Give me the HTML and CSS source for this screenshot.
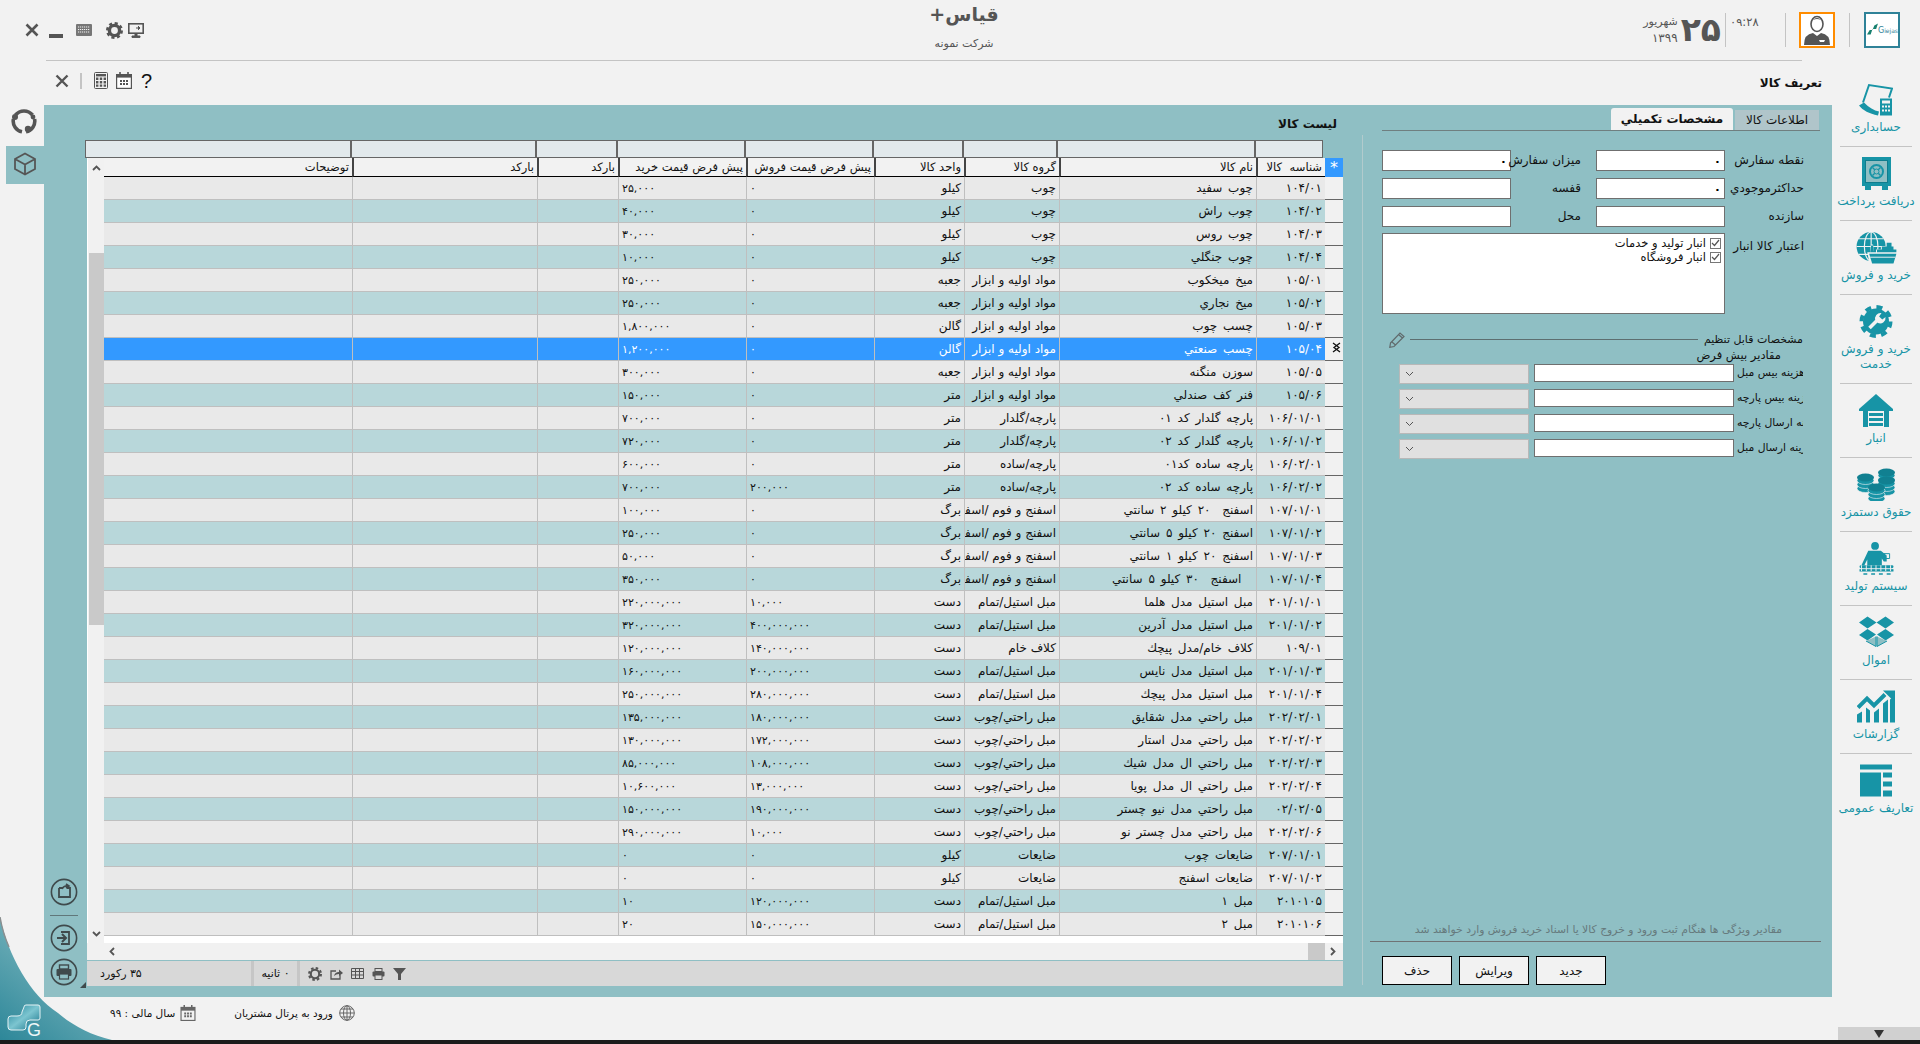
FILE: index.html
```html
<!DOCTYPE html>
<html lang="fa">
<head>
  <meta charset="UTF-8">
  <title>قیاس+</title>
  <link rel="stylesheet" href="styles.css">
</head>
<body>

  <!-- curved corner behind the panel -->
  <svg class="corner" width="130" height="135" viewBox="0 0 130 135">
    <defs>
      <linearGradient id="cornerFill" x1="0" y1="1" x2="0.7" y2="0">
        <stop offset="0" stop-color="#2d8799"/>
        <stop offset="1" stop-color="#8cc0c6"/>
      </linearGradient>
      <linearGradient id="logoFill" x1="0" y1="0" x2="1" y2="1">
        <stop offset="0" stop-color="#1c7f96"/>
        <stop offset="0.5" stop-color="#7cc5d0"/>
        <stop offset="1" stop-color="#0f6c84"/>
      </linearGradient>
    </defs>
    <path d="M0 12 C8 50 30 90 58 108 C72 120 90 130 112 135 L0 135 Z" fill="url(#cornerFill)"/>
    <path d="M0 12 C2 24 5 33 9 42" fill="none" stroke="#8a8f90" stroke-width="1.5"/>
    <path d="M24 102 q0 -2 2 -2 h12 q2 0 2 2 v11 q0 2 -2 2 h-8 q-4 0 -4 4 v3 q0 3 -3 3 h-12 q-3 0 -3 -3 v-8 q0 -3 3 -3 h6 q5 0 5 -4 z" fill="url(#logoFill)" stroke="#e6f3f5" stroke-width="1"/>
    <text x="27" y="131" class="corner-g">G</text>
  </svg>

  <header class="head">
    <div class="win-tools">
      <svg class="i-close" width="14" height="14" viewBox="0 0 14 14"><path d="M1.5 1.5 L12.5 12.5 M12.5 1.5 L1.5 12.5" stroke="#555" stroke-width="2.6"/></svg>
      <span class="i-min"></span>
      <svg class="i-kbd" width="16" height="12" viewBox="0 0 16 12"><rect width="16" height="12" rx="1" fill="#777"/><path d="M2 3 h12 M2 5.5 h12 M2 8 h12" stroke="#f2f2f2" stroke-width="1.1" stroke-dasharray="1.2 0.8"/></svg>
      <svg class="i-gear" width="17" height="17" viewBox="0 0 20 20"><circle cx="10" cy="10" r="6" fill="none" stroke="#555" stroke-width="4"/><circle cx="10" cy="10" r="8.5" fill="none" stroke="#555" stroke-width="3" stroke-dasharray="3.6 3.07"/></svg>
      <svg class="i-screen" width="16" height="15" viewBox="0 0 16 15"><rect x="0.8" y="0.8" width="14.4" height="9.4" fill="none" stroke="#555" stroke-width="1.6"/><path d="M7 11 h2 v2 h3 v1.4 h-8 v-1.4 h3z M8 5 h4 M10 3 l2 2 l-2 2" fill="#555" stroke="#555"/></svg>
    </div>
    <div class="brand">
      <div class="brand-name" dir="rtl">قیاس+</div>
      <div class="brand-co" dir="rtl">شرکت نمونه</div>
    </div>
    <div class="status-info">
      <div class="date-small" dir="rtl"><span>شهریور</span><span class="year">۱۳۹۹</span></div>
      <div class="date-big">۲۵</div>
      <div class="sep date-sep"></div>
      <div class="clock">۰۹:۲۸</div>
      <div class="sep clock-sep"></div>
      <div class="avatar">
        <svg width="32" height="32" viewBox="0 0 32 32"><ellipse cx="16" cy="10" rx="6" ry="7.5" fill="#fff" stroke="#555" stroke-width="1.6"/><path d="M10 8 q6 -8 12 0 q-2 -3 -6 -3 q-4 0 -6 3z" fill="#555"/><path d="M3 31 q0 -11 9 -12 l4 3 l4 -3 q9 1 9 12z" fill="#555"/><path d="M18 26 h6 l-1 2 h-4z" fill="#fff"/></svg>
      </div>
      <div class="sep logo-sep"></div>
      <div class="app-logo">
        <svg width="12" height="14" viewBox="0 0 12 14"><path d="M0 12 l3 -5 h3 l2 -5 l4 -2 l-2 6 h-4 l-2 6z" fill="#17806f"/></svg>
        <span class="app-logo-g">G</span><span class="app-logo-t">iejas</span>
      </div>
    </div>
  </header>
  <div class="head-rule"></div>

  <div class="middle">

    <aside class="rail">
      <svg class="rail-ring" width="26" height="26" viewBox="0 0 26 26"><path d="M4.5 7 A11 11 0 0 1 21.5 7 M23.6 11 A11 11 0 0 1 15 23.8 M11 23.8 A11 11 0 0 1 2.4 11" fill="none" stroke="#555" stroke-width="3.6"/><circle cx="4" cy="9" r="3" fill="#555"/><circle cx="17" cy="21" r="3.2" fill="#555"/><circle cx="22" cy="9" r="2.4" fill="#555"/></svg>
      <div class="rail-tab">
        <svg width="24" height="24" viewBox="0 0 24 24"><path d="M12 1.5 L22 7 V17 L12 22.5 L2 17 V7 Z M2 7 L12 12.5 L22 7 M12 12.5 V22.5" fill="none" stroke="#555" stroke-width="1.8"/></svg>
      </div>
    </aside>

    <main class="center">
      <div class="toolbar">
        <div class="tool-icons">
          <svg width="14" height="14" viewBox="0 0 14 14"><path d="M1.5 1.5 L12.5 12.5 M12.5 1.5 L1.5 12.5" stroke="#555" stroke-width="2.4"/></svg>
          <span class="tool-sep"></span>
          <svg class="t-calc" width="14" height="17" viewBox="0 0 14 17"><rect x="0.5" y="0.5" width="13" height="16" rx="1" fill="none" stroke="#555"/><rect x="2" y="2" width="10" height="2.4" fill="#555"/><path d="M2 5.6h2.4v2.4h-2.4z M5.8 5.6h2.4v2.4h-2.4z M9.6 5.6h2.4v2.4h-2.4z M2 9h2.4v2.4h-2.4z M5.8 9h2.4v2.4h-2.4z M9.6 9h2.4v2.4h-2.4z M2 12.4h2.4v2.4h-2.4z M5.8 12.4h2.4v2.4h-2.4z M9.6 12.4h2.4v2.4h-2.4z" fill="#555"/></svg>
          <svg class="t-cal" width="16" height="17" viewBox="0 0 16 17"><rect x="0.6" y="2.6" width="14.8" height="13.8" fill="#fff" stroke="#555" stroke-width="1.2"/><rect x="0.6" y="2.6" width="14.8" height="3" fill="#555"/><path d="M4 0v3 M12 0v3" stroke="#555" stroke-width="1.6"/><path d="M4 8h2v2h-2z M7 8h2v2h-2z M10 8h2v2h-2z M4 11h2v2h-2z M7 11h2v2h-2z M10 11h2v2h-2z" fill="#555"/></svg>
          <span class="t-help">?</span>
        </div>
        <h2 class="page-title" dir="rtl">تعريف كالا</h2>
      </div>

      <div class="panel">

        <div class="panel-rail">
          <svg class="pr-a" width="28" height="28" viewBox="0 0 28 28"><circle cx="14" cy="14" r="12.6" fill="none" stroke="#3f4a4c" stroke-width="1.6"/><path d="M9 10 h4 M17 10 h3 v9 h-11 v-9" fill="none" stroke="#3f4a4c" stroke-width="1.8"/><path d="M12 11 q2 -4 7 -3 M16 6 l3 2 l-3 2" fill="none" stroke="#3f4a4c" stroke-width="1.6"/></svg>
          <div class="pr-line"></div>
          <svg class="pr-b" width="28" height="28" viewBox="0 0 28 28"><circle cx="14" cy="14" r="12.6" fill="none" stroke="#3f4a4c" stroke-width="1.6"/><path d="M7 14 h8 M12 10 l4 4 l-4 4" fill="none" stroke="#3f4a4c" stroke-width="2"/><path d="M11 8 h8 v12 h-8" fill="none" stroke="#3f4a4c" stroke-width="1.8"/></svg>
          <div class="pr-print">
            <svg width="28" height="28" viewBox="0 0 28 28"><circle cx="14" cy="14" r="12.6" fill="none" stroke="#3f4a4c" stroke-width="1.6"/><rect x="9.5" y="7" width="9" height="4" fill="none" stroke="#3f4a4c" stroke-width="1.4"/><rect x="6.5" y="11" width="15" height="7" rx="1" fill="#3f4a4c"/><rect x="9.5" y="16" width="9" height="5" fill="#8fbfc4" stroke="#3f4a4c" stroke-width="1.2"/></svg>
            <span class="pr-mark"></span>
          </div>
        </div>

        <section class="list">
          <h3 class="list-title" dir="rtl">ليست كالا</h3>
          <div class="group-head" dir="rtl">
            <span class="gh-1"></span><span class="gh-2"></span><span class="gh-3"></span><span class="gh-4"></span><span class="gh-5"></span><span class="gh-6"></span><span class="gh-7"></span><span class="gh-8"></span><span class="gh-9"></span>
          </div>
          <div class="grid-body">
            <div class="vscroll">
              <svg class="vs-up" width="9" height="6" viewBox="0 0 9 6"><path d="M1 5 L4.5 1.5 L8 5" fill="none" stroke="#555" stroke-width="1.8"/></svg>
              <div class="vs-thumb"></div>
              <svg class="vs-down" width="9" height="6" viewBox="0 0 9 6"><path d="M1 1 L4.5 4.5 L8 1" fill="none" stroke="#555" stroke-width="1.8"/></svg>
            </div>
            <div class="grid-wrap">
              <table class="grid" dir="rtl">
                <colgroup>
                  <col class="c-ind"><col class="c-code"><col class="c-name"><col class="c-group"><col class="c-unit"><col class="c-price"><col class="c-price"><col class="c-bar"><col class="c-bar2"><col class="c-note">
                </colgroup>
                <thead>
                  <tr>
                    <th class="star">*</th>
                    <th>شناسه كالا</th>
                    <th>نام كالا</th>
                    <th>گروه كالا</th>
                    <th>واحد كالا</th>
                    <th>پیش فرض قیمت فروش</th>
                    <th>پیش فرض قیمت خرید</th>
                    <th>باركد</th>
                    <th>باركد</th>
                    <th>توضیحات</th>
                  </tr>
                </thead>
                <tbody>
                  <tr><td></td><td>۱۰۴/۰۱</td><td>چوب سفيد</td><td>چوب</td><td>كيلو</td><td class="num">۰</td><td class="num">۲۵,۰۰۰</td><td></td><td></td><td></td></tr>
                  <tr><td></td><td>۱۰۴/۰۲</td><td>چوب راش</td><td>چوب</td><td>كيلو</td><td class="num">۰</td><td class="num">۴۰,۰۰۰</td><td></td><td></td><td></td></tr>
                  <tr><td></td><td>۱۰۴/۰۳</td><td>چوب روس</td><td>چوب</td><td>كيلو</td><td class="num">۰</td><td class="num">۳۰,۰۰۰</td><td></td><td></td><td></td></tr>
                  <tr><td></td><td>۱۰۴/۰۴</td><td>چوب جنگلي</td><td>چوب</td><td>كيلو</td><td class="num">۰</td><td class="num">۱۰,۰۰۰</td><td></td><td></td><td></td></tr>
                  <tr><td></td><td>۱۰۵/۰۱</td><td>ميخ ميخكوب</td><td>مواد اوليه و ابزار</td><td>جعبه</td><td class="num">۰</td><td class="num">۲۵۰,۰۰۰</td><td></td><td></td><td></td></tr>
                  <tr><td></td><td>۱۰۵/۰۲</td><td>ميخ نجاري</td><td>مواد اوليه و ابزار</td><td>جعبه</td><td class="num">۰</td><td class="num">۲۵۰,۰۰۰</td><td></td><td></td><td></td></tr>
                  <tr><td></td><td>۱۰۵/۰۳</td><td>چسب چوب</td><td>مواد اوليه و ابزار</td><td>گالن</td><td class="num">۰</td><td class="num">۱,۸۰۰,۰۰۰</td><td></td><td></td><td></td></tr>
                  <tr class="sel"><td><svg width="9" height="11" viewBox="0 0 9 11"><path d="M8 1 L2 5.5 L8 10 M1 1 L7 5.5 L1 10" fill="none" stroke="#111" stroke-width="1.3"/></svg></td><td>۱۰۵/۰۴</td><td>چسب صنعتي</td><td>مواد اوليه و ابزار</td><td>گالن</td><td class="num">۰</td><td class="num">۱,۲۰۰,۰۰۰</td><td></td><td></td><td></td></tr>
                  <tr><td></td><td>۱۰۵/۰۵</td><td>سوزن منگنه</td><td>مواد اوليه و ابزار</td><td>جعبه</td><td class="num">۰</td><td class="num">۳۰۰,۰۰۰</td><td></td><td></td><td></td></tr>
                  <tr><td></td><td>۱۰۵/۰۶</td><td>فنر كف صندلي</td><td>مواد اوليه و ابزار</td><td>متر</td><td class="num">۰</td><td class="num">۱۵۰,۰۰۰</td><td></td><td></td><td></td></tr>
                  <tr><td></td><td>۱۰۶/۰۱/۰۱</td><td>پارچه گلدار كد ۰۱</td><td>پارچه/گلدار</td><td>متر</td><td class="num">۰</td><td class="num">۷۰۰,۰۰۰</td><td></td><td></td><td></td></tr>
                  <tr><td></td><td>۱۰۶/۰۱/۰۲</td><td>پارچه گلدار كد ۰۲</td><td>پارچه/گلدار</td><td>متر</td><td class="num">۰</td><td class="num">۷۲۰,۰۰۰</td><td></td><td></td><td></td></tr>
                  <tr><td></td><td>۱۰۶/۰۲/۰۱</td><td>پارچه ساده كد۰۱</td><td>پارچه/ساده</td><td>متر</td><td class="num">۰</td><td class="num">۶۰۰,۰۰۰</td><td></td><td></td><td></td></tr>
                  <tr><td></td><td>۱۰۶/۰۲/۰۲</td><td>پارچه ساده كد ۰۲</td><td>پارچه/ساده</td><td>متر</td><td class="num">۲۰۰,۰۰۰</td><td class="num">۷۰۰,۰۰۰</td><td></td><td></td><td></td></tr>
                  <tr><td></td><td>۱۰۷/۰۱/۰۱</td><td>اسفنج&nbsp; ۲۰ كيلو ۲ سانتي</td><td>اسفنج و فوم /اسفنج</td><td>برگ</td><td class="num">۰</td><td class="num">۱۰۰,۰۰۰</td><td></td><td></td><td></td></tr>
                  <tr><td></td><td>۱۰۷/۰۱/۰۲</td><td>اسفنج ۲۰ كيلو ۵ سانتي</td><td>اسفنج و فوم /اسفنج</td><td>برگ</td><td class="num">۰</td><td class="num">۲۵۰,۰۰۰</td><td></td><td></td><td></td></tr>
                  <tr><td></td><td>۱۰۷/۰۱/۰۳</td><td>اسفنج ۲۰ كيلو ۱ سانتي</td><td>اسفنج و فوم /اسفنج</td><td>برگ</td><td class="num">۰</td><td class="num">۵۰,۰۰۰</td><td></td><td></td><td></td></tr>
                  <tr><td></td><td>۱۰۷/۰۱/۰۴</td><td>&nbsp; اسفنج&nbsp; ۳۰ كيلو ۵ سانتي</td><td>اسفنج و فوم /اسفنج</td><td>برگ</td><td class="num">۰</td><td class="num">۳۵۰,۰۰۰</td><td></td><td></td><td></td></tr>
                  <tr><td></td><td>۲۰۱/۰۱/۰۱</td><td>مبل استيل مدل هلما</td><td>مبل استيل/تمام</td><td>دست</td><td class="num">۱۰,۰۰۰</td><td class="num">۲۲۰,۰۰۰,۰۰۰</td><td></td><td></td><td></td></tr>
                  <tr><td></td><td>۲۰۱/۰۱/۰۲</td><td>مبل استيل مدل آدرين</td><td>مبل استيل/تمام</td><td>دست</td><td class="num">۴۰۰,۰۰۰,۰۰۰</td><td class="num">۳۲۰,۰۰۰,۰۰۰</td><td></td><td></td><td></td></tr>
                  <tr><td></td><td>۱۰۹/۰۱</td><td>كلاف خام/مدل پيچك</td><td>كلاف خام</td><td>دست</td><td class="num">۱۴۰,۰۰۰,۰۰۰</td><td class="num">۱۲۰,۰۰۰,۰۰۰</td><td></td><td></td><td></td></tr>
                  <tr><td></td><td>۲۰۱/۰۱/۰۳</td><td>مبل استيل مدل نايس</td><td>مبل استيل/تمام</td><td>دست</td><td class="num">۲۰۰,۰۰۰,۰۰۰</td><td class="num">۱۶۰,۰۰۰,۰۰۰</td><td></td><td></td><td></td></tr>
                  <tr><td></td><td>۲۰۱/۰۱/۰۴</td><td>مبل استيل مدل پيچك</td><td>مبل استيل/تمام</td><td>دست</td><td class="num">۲۸۰,۰۰۰,۰۰۰</td><td class="num">۲۵۰,۰۰۰,۰۰۰</td><td></td><td></td><td></td></tr>
                  <tr><td></td><td>۲۰۲/۰۲/۰۱</td><td>مبل راحتي مدل شقايق</td><td>مبل راحتي/چوب</td><td>دست</td><td class="num">۱۸۰,۰۰۰,۰۰۰</td><td class="num">۱۳۵,۰۰۰,۰۰۰</td><td></td><td></td><td></td></tr>
                  <tr><td></td><td>۲۰۲/۰۲/۰۲</td><td>مبل راحتي مدل استار</td><td>مبل راحتي/چوب</td><td>دست</td><td class="num">۱۷۲,۰۰۰,۰۰۰</td><td class="num">۱۳۰,۰۰۰,۰۰۰</td><td></td><td></td><td></td></tr>
                  <tr><td></td><td>۲۰۲/۰۲/۰۳</td><td>مبل راحتي ال مدل شيك</td><td>مبل راحتي/چوب</td><td>دست</td><td class="num">۱۰۸,۰۰۰,۰۰۰</td><td class="num">۸۵,۰۰۰,۰۰۰</td><td></td><td></td><td></td></tr>
                  <tr><td></td><td>۲۰۲/۰۲/۰۴</td><td>مبل راحتي ال مدل پويا</td><td>مبل راحتي/چوب</td><td>دست</td><td class="num">۱۳,۰۰۰,۰۰۰</td><td class="num">۱۰,۶۰۰,۰۰۰</td><td></td><td></td><td></td></tr>
                  <tr><td></td><td>۰۲/۰۲/۰۵</td><td>مبل راحتي مدل نيو چستر</td><td>مبل راحتي/چوب</td><td>دست</td><td class="num">۱۹۰,۰۰۰,۰۰۰</td><td class="num">۱۵۰,۰۰۰,۰۰۰</td><td></td><td></td><td></td></tr>
                  <tr><td></td><td>۲۰۲/۰۲/۰۶</td><td>مبل راحتي مدل چستر نو</td><td>مبل راحتي/چوب</td><td>دست</td><td class="num">۱۰,۰۰۰</td><td class="num">۲۹۰,۰۰۰,۰۰۰</td><td></td><td></td><td></td></tr>
                  <tr><td></td><td>۲۰۷/۰۱/۰۱</td><td>ضايعات چوب</td><td>ضايعات</td><td>كيلو</td><td class="num">۰</td><td class="num">۰</td><td></td><td></td><td></td></tr>
                  <tr><td></td><td>۲۰۷/۰۱/۰۲</td><td>ضايعات اسفنج</td><td>ضايعات</td><td>كيلو</td><td class="num">۰</td><td class="num">۰</td><td></td><td></td><td></td></tr>
                  <tr><td></td><td>۲۰۱۰۱۰۵</td><td>مبل ۱</td><td>مبل استيل/تمام</td><td>دست</td><td class="num">۱۲۰,۰۰۰,۰۰۰</td><td class="num">۱۰</td><td></td><td></td><td></td></tr>
                  <tr><td></td><td>۲۰۱۰۱۰۶</td><td>مبل ۲</td><td>مبل استيل/تمام</td><td>دست</td><td class="num">۱۵۰,۰۰۰,۰۰۰</td><td class="num">۲۰</td><td></td><td></td><td></td></tr>
                </tbody>
              </table>
            </div>
          </div>
          <div class="hscroll">
            <svg width="6" height="9" viewBox="0 0 6 9"><path d="M5 1 L1.5 4.5 L5 8" fill="none" stroke="#555" stroke-width="1.8"/></svg>
            <span class="hs-thumb"></span>
            <svg width="6" height="9" viewBox="0 0 6 9"><path d="M1 1 L4.5 4.5 L1 8" fill="none" stroke="#555" stroke-width="1.8"/></svg>
          </div>
          <div class="grid-foot">
            <span class="gf-count" dir="rtl">۳۵ ركورد</span>
            <span class="gf-time" dir="rtl">۰ ثانيه</span>
            <span class="gf-icons">
              <svg width="14" height="14" viewBox="0 0 20 20"><circle cx="10" cy="10" r="6" fill="none" stroke="#555" stroke-width="3"/><circle cx="10" cy="10" r="8.5" fill="none" stroke="#555" stroke-width="3" stroke-dasharray="3.6 3.07"/></svg>
              <svg width="13" height="12" viewBox="0 0 13 12"><path d="M6 3 H1 V11 H10 V7" fill="none" stroke="#555" stroke-width="1.3"/><path d="M4 8 q1 -4 5 -4 V1.5 l4 3.5 l-4 3 V6 q-3 0 -5 2z" fill="#555"/></svg>
              <svg width="13" height="11" viewBox="0 0 13 11"><path d="M0.5 0.5 h12 v10 h-12z M0.5 3.5 h12 M0.5 7 h12 M4.5 0.5 v10 M8.5 0.5 v10" fill="none" stroke="#555"/></svg>
              <svg width="13" height="12" viewBox="0 0 13 12"><rect x="3" y="0.5" width="7" height="3" fill="none" stroke="#555"/><rect x="0.5" y="3.5" width="12" height="5" rx="1" fill="#555"/><rect x="3" y="7" width="7" height="4.5" fill="#d8d8d8" stroke="#555"/></svg>
              <svg width="13" height="12" viewBox="0 0 13 12"><path d="M0 0 H13 L8 6 V12 H5 V6 Z" fill="#555"/></svg>
            </span>
          </div>
        </section>

        <section class="side">
          <div class="tabs" dir="rtl">
            <span class="tab">اطلاعات كالا</span>
            <span class="tab tab-on">مشخصات تكميلي</span>
          </div>
          <div class="side-body">
            <div class="fields">
              <input class="box" dir="rtl" value="۰"><label dir="rtl">ميزان سفارش</label>
              <input class="box" dir="rtl" value="۰"><label dir="rtl">نقطه سفارش</label>
              <input class="box" dir="rtl"><label dir="rtl">قفسه</label>
              <input class="box" dir="rtl" value="۰"><label dir="rtl">حداكثرموجودي</label>
              <input class="box" dir="rtl"><label dir="rtl">محل</label>
              <input class="box" dir="rtl"><label dir="rtl">سازنده</label>
              <div class="stores" dir="rtl">
                <div class="store"><span class="chk"><svg width="9" height="8" viewBox="0 0 9 8"><path d="M1 4 L3.5 6.5 L8 1" fill="none" stroke="#555" stroke-width="1.2"/></svg></span>انبار توليد و خدمات</div>
                <div class="store"><span class="chk"><svg width="9" height="8" viewBox="0 0 9 8"><path d="M1 4 L3.5 6.5 L8 1" fill="none" stroke="#555" stroke-width="1.2"/></svg></span>انبار فروشگاه</div>
              </div>
              <label class="stores-label" dir="rtl">اعتبار كالا انبار</label>
            </div>

            <div class="custom-head">
              <svg width="16" height="17" viewBox="0 0 16 17"><path d="M1.5 12 L11 2 L15 5.5 L5 15.5 L0.8 16.3 Z M9.5 3.5 L13.5 7 M3 11 L6.5 14" fill="none" stroke="#606a6c" stroke-width="1.2"/></svg>
              <span class="custom-line"></span>
              <span dir="rtl">مشخصات قابل تنظيم</span>
            </div>
            <div class="custom-sub" dir="rtl">مقادير بيش فرض</div>
            <div class="custom-rows">
              <span class="combo"><svg width="9" height="6" viewBox="0 0 9 6"><path d="M1 1 L4.5 4.5 L8 1" fill="none" stroke="#555" stroke-width="1"/></svg></span><span class="box plain"></span><span class="clip"><span dir="rtl">هزينه بيس مبل</span></span>
              <span class="combo"><svg width="9" height="6" viewBox="0 0 9 6"><path d="M1 1 L4.5 4.5 L8 1" fill="none" stroke="#555" stroke-width="1"/></svg></span><span class="box plain"></span><span class="clip"><span dir="rtl">هزينه بيس پارچه</span></span>
              <span class="combo"><svg width="9" height="6" viewBox="0 0 9 6"><path d="M1 1 L4.5 4.5 L8 1" fill="none" stroke="#555" stroke-width="1"/></svg></span><span class="box plain"></span><span class="clip"><span dir="rtl">هزينه ارسال پارچه</span></span>
              <span class="combo"><svg width="9" height="6" viewBox="0 0 9 6"><path d="M1 1 L4.5 4.5 L8 1" fill="none" stroke="#555" stroke-width="1"/></svg></span><span class="box plain"></span><span class="clip"><span dir="rtl">هزينه ارسال مبل</span></span>
            </div>

            <div class="hint" dir="rtl">مقادير ويژگی ها هنگام ثبت ورود و خروج كالا يا اسناد خريد فروش وارد خواهند شد</div>
            <div class="hint-rule"></div>
            <div class="actions">
              <button>حذف</button>
              <button>ويرايش</button>
              <button>جديد</button>
            </div>
          </div>
        </section>
      </div>
    </main>

    <nav class="nav">
      <a class="nav-item">
        <svg width="34" height="32" viewBox="0 0 34 32"><path d="M4 19 L10 1.5 L33 5 L30 14" fill="none" stroke="#1794a6" stroke-width="2"/><path d="M0 22 L5 19 C10 24 15 27 20 28 L19 32 C10 30 4 27 0 22Z" fill="#1794a6"/><rect x="21" y="15" width="12" height="17" fill="#1794a6"/><path d="M23 17h8v3h-8z M23 22h2v2h-2z M26 22h2v2h-2z M29 22h2v2h-2z M23 26h2v2h-2z M26 26h2v2h-2z M29 26h2v2h-2z" fill="#f2f2f2"/></svg>
        <span>حسابداری</span>
      </a>
      <a class="nav-item">
        <svg width="29" height="33" viewBox="0 0 29 33"><rect width="29" height="29" fill="#1794a6"/><path d="M3 29h6v4h-6z M20 29h6v4h-6z" fill="#1794a6"/><rect x="3.5" y="3.5" width="22" height="22" fill="#8fbfc4" stroke="#0f7d8e"/><circle cx="14.5" cy="14.5" r="6.5" fill="none" stroke="#1794a6" stroke-width="2"/><path d="M10.5 10.5 L18.5 18.5 M18.5 10.5 L10.5 18.5" stroke="#1794a6" stroke-width="1.4"/><circle cx="14.5" cy="14.5" r="2.5" fill="#8fbfc4" stroke="#1794a6"/></svg>
        <span>دریافت پرداخت</span>
      </a>
      <a class="nav-item">
        <svg width="42" height="34" viewBox="0 0 42 34"><circle cx="16" cy="16" r="15" fill="#1794a6"/><g fill="none" stroke="#f2f2f2" stroke-width="1.2"><ellipse cx="16" cy="16" rx="7" ry="15"/><path d="M16 1V31 M1 16H31 M3.5 8H28.5 M3.5 24H28.5"/></g><path d="M12 22h3l1-8h2l1 8h2v-3h5v-3h5v-4h5v4h2v3h3v3h1l-2 10H14z" fill="#f2f2f2"/><path d="M22 19h5v-3h5v-4h5v4h2v3h3v3H22z M16 15h2l1 7h-4z" fill="#1794a6"/><path d="M14 23.5H42 L39 33.5H17Z" fill="#1794a6"/><path d="M15 27H41" stroke="#f2f2f2"/></svg>
        <span>خرید و فروش</span>
      </a>
      <a class="nav-item nav-two">
        <svg width="34" height="33" viewBox="0 0 34 33"><circle cx="17" cy="16.5" r="13" fill="#1794a6"/><circle cx="17" cy="16.5" r="14.5" fill="none" stroke="#1794a6" stroke-width="4" stroke-dasharray="6 5.39"/><path d="M10.5 23 L19 14.5" stroke="#f2f2f2" stroke-width="3.6"/><path d="M22.5 8 a5.5 5.5 0 0 0 -6 7.5 l2.5 2.5 a5.5 5.5 0 0 0 7.5 -6 l-3.2 2.6 l-3.2 -3.2z" fill="#f2f2f2"/></svg>
        <span>خرید و فروش خدمت</span>
      </a>
      <a class="nav-item">
        <svg width="34" height="33" viewBox="0 0 34 33"><path d="M17 0 L34 15 V17 H0 V15Z" fill="#1794a6"/><path d="M4 17H30V33H4Z" fill="#1794a6"/><path d="M9 17h16v16H9z" fill="#f2f2f2"/><path d="M10 19h14v3h-14z M10 24h14v3h-14z M10 29h14v3h-14z" fill="#1794a6"/></svg>
        <span>انبار</span>
      </a>
      <a class="nav-item">
        <svg width="38" height="32" viewBox="0 0 38 32"><defs><g id="coin"><ellipse cx="8.5" cy="15" rx="8.5" ry="4" fill="#1794a6" stroke="#f2f2f2" stroke-width="0.6"/><ellipse cx="8.5" cy="11" rx="8.5" ry="4" fill="#1794a6" stroke="#f2f2f2" stroke-width="0.6"/><ellipse cx="8.5" cy="7" rx="8.5" ry="4" fill="#1794a6" stroke="#f2f2f2" stroke-width="0.6"/><ellipse cx="8.5" cy="4" rx="8.5" ry="4" fill="#118091"/></g></defs><use href="#coin" x="21" y="0"/><use href="#coin" x="21" y="8"/><use href="#coin" x="0" y="5"/><use href="#coin" x="11" y="15"/></svg>
        <span>حقوق دستمزد</span>
      </a>
      <a class="nav-item">
        <svg width="35" height="34" viewBox="0 0 35 34"><circle cx="16" cy="4" r="4" fill="#1794a6"/><path d="M9 9 H22 L28 14 V20 H25 L23 17 V24 H8 V18 L5 24 H2 Z" fill="#1794a6"/><path d="M25 12 h6 v5 h-6z" fill="none" stroke="#1794a6"/><rect x="0" y="24" width="35" height="3" rx="1.5" fill="#1794a6"/><rect x="0" y="28" width="35" height="2.4" fill="#1794a6"/><path d="M2 24v6 M7 24v6 M12 24v6 M17 24v6 M22 24v6 M27 24v6 M32 24v6" stroke="#f2f2f2"/><path d="M4 33h4 M12 33h4 M20 33h4 M28 33h4" stroke="#1794a6" stroke-width="1.4"/></svg>
        <span>سیستم تولید</span>
      </a>
      <a class="nav-item">
        <svg width="35" height="32" viewBox="0 0 35 32"><path d="M8.5 0 L17.5 6 L8.5 12 L0 6Z M26.5 0 L35 6 L26.5 12 L17.5 6Z M8.5 12.5 L17 18 L8.5 24 L0 18.5Z M26.5 12.5 L35 18.5 L26.5 24 L18 18Z" fill="#1794a6"/><path d="M7 24.5 L17 30 V20 M28 24.5 L18 30 V20" fill="#8fbfc4" stroke="#1794a6"/></svg>
        <span>اموال</span>
      </a>
      <a class="nav-item">
        <svg width="38" height="32" viewBox="0 0 38 32"><path d="M1 17 L10 8 L17 15 L28 4" fill="none" stroke="#1794a6" stroke-width="4"/><path d="M26 0 H38 V12 Z" fill="#1794a6"/><path d="M0 32 V24 L5 21 V32Z M9 32 V17 L13 20 V32Z M17 32 V22 L22 18 V32Z M26 32 V13 L31 9 V32Z M33 32 V9 L38 5 V32Z" fill="#1794a6"/></svg>
        <span>گزارشات</span>
      </a>
      <a class="nav-item">
        <svg width="32" height="32" viewBox="0 0 32 32"><path d="M0 0H32V5H0Z M0 8H21V32H0Z M23 8H32V13H23Z M23 17H32V22H23Z M23 26H32V32H23Z" fill="#1794a6"/></svg>
        <span>تعاریف عمومی</span>
      </a>
    </nav>
  </div>

  <footer class="status">
    <span class="st-text" dir="rtl">سال مالی : ۹۹</span>
    <svg class="st-cal" width="16" height="16" viewBox="0 0 16 17"><rect x="0.6" y="2.6" width="14.8" height="13.8" fill="#f2f2f2" stroke="#666" stroke-width="1.2"/><rect x="0.6" y="2.6" width="14.8" height="3.4" fill="#666"/><path d="M4 0v3 M12 0v3" stroke="#666" stroke-width="1.6"/><path d="M4 8h2v2h-2z M7 8h2v2h-2z M10 8h2v2h-2z M4 11h2v2h-2z M7 11h2v2h-2z M10 11h2v2h-2z" fill="#666"/></svg>
    <span class="st-text st-portal" dir="rtl">ورود به پرتال مشتریان</span>
    <svg class="st-globe" width="16" height="16" viewBox="0 0 16 16"><g fill="none" stroke="#666"><circle cx="8" cy="8" r="7.3"/><ellipse cx="8" cy="8" rx="3.5" ry="7.3"/><path d="M8 .7V15.3 M.7 8H15.3 M2 4H14 M2 12H14"/></g></svg>
    <span class="st-fold"><i></i></span>
  </footer>
  <div class="black-bar"></div>

</body>
</html>
```

FILE: styles.css
```css
* {
  box-sizing: border-box;
}

html, body {
  margin: 0;
  padding: 0;
}

body {
  position: relative;
  width: 1920px;
  height: 1044px;
  overflow: hidden;
  background: #f2f2f2;
  font-family: "DejaVu Sans", sans-serif;
  font-size: 12px;
  color: #111;
}

/* corner swoosh */
.corner {
  position: absolute;
  left: 0;
  top: 905px;
}

.corner-g {
  font-family: "Liberation Sans", sans-serif;
  font-size: 18px;
  fill: #eef7f8;
}

/* top header */
.head {
  height: 60px;
  display: grid;
  grid-template-columns: 1fr auto 1fr;
  align-items: center;
}

.head-rule {
  height: 1px;
  margin: 0 118px 0 46px;
  background: #c4c4c4;
}

.win-tools {
  display: flex;
  align-items: center;
  padding-left: 25px;
}

.i-min {
  width: 14px;
  height: 4px;
  margin: 11px 0 0 10px;
  background: #555;
}

.i-kbd {
  margin-left: 13px;
}

.i-gear {
  margin-left: 14px;
}

.i-screen {
  margin-left: 5px;
}

.brand {
  text-align: center;
  padding-left: 8px;
  color: #555;
}

.brand-name {
  font-size: 19px;
  font-weight: bold;
  line-height: 28px;
}

.brand-co {
  font-size: 11px;
  line-height: 32px;
}

.status-info {
  display: flex;
  align-items: center;
  justify-content: flex-end;
  padding-right: 20px;
  color: #555;
}

.date-small {
  display: flex;
  flex-direction: column;
  gap: 4px;
  font-size: 11px;
  line-height: 13px;
}

.year {
  font-size: 12px;
  letter-spacing: 2px;
}

.date-big {
  font-size: 33px;
  font-weight: bold;
  line-height: 36px;
  margin-left: 3px;
}

.sep {
  width: 1px;
  height: 34px;
  background: #c4c4c4;
}

.date-sep {
  margin-left: 4px;
}

.clock {
  font-size: 11.5px;
  letter-spacing: 1px;
  margin: -16px 0 0 4px;
  width: 55px;
}

.avatar {
  width: 36px;
  height: 36px;
  margin-left: 13px;
  border: 2px solid #ff8c00;
  background: #fff;
}

.logo-sep {
  margin-left: 14px;
}

.app-logo {
  display: flex;
  align-items: center;
  width: 36px;
  height: 36px;
  margin-left: 14px;
  padding-left: 1px;
  border: 2px solid #2f8298;
  background: #fff;
  color: #2f8298;
  overflow: hidden;
}

.app-logo-g {
  font-size: 8px;
}

.app-logo-t {
  font-size: 6px;
}

/* middle */
.middle {
  display: flex;
  height: 936px;
}

.rail {
  width: 44px;
  padding-top: 47px;
}

.rail-ring {
  display: block;
  margin-left: 11px;
}

.rail-tab {
  display: flex;
  align-items: center;
  justify-content: center;
  width: 38px;
  height: 38px;
  margin: 12px 0 0 6px;
  padding-bottom: 3px;
  background: #8fbfc4;
}

.center {
  width: 1788px;
}

.toolbar {
  height: 44px;
  display: flex;
  align-items: center;
  justify-content: space-between;
  padding: 0 10px 0 11px;
}

.tool-icons {
  display: flex;
  align-items: center;
  margin-top: -5px;
}

.tool-sep {
  width: 2px;
  height: 16px;
  margin-left: 11px;
  background: #c4c4c4;
}

.t-calc {
  margin-left: 12px;
}

.t-cal {
  margin-left: 8px;
}

.t-help {
  margin-left: 9px;
  font-family: "Liberation Sans", sans-serif;
  font-size: 20px;
  line-height: 20px;
  color: #111;
}

.page-title {
  margin: 0;
  font-size: 12px;
  font-weight: bold;
}

/* main panel */
.panel {
  display: flex;
  height: 892px;
  background: #8fbfc4;
}

.panel-rail {
  width: 43px;
  padding: 773px 0 0 6px;
}

.pr-a, .pr-b {
  display: block;
}

.pr-b {
  margin-top: 8px;
}

.pr-line {
  width: 28px;
  height: 1px;
  margin-top: 9px;
  background: #60777a;
}

.pr-print {
  position: relative;
  margin-top: 6px;
}

.pr-print svg {
  display: block;
}

.pr-mark {
  position: absolute;
  right: 1px;
  bottom: -2px;
  border-style: solid;
  border-width: 0 0 6px 6px;
  border-color: transparent transparent #3f4a4c transparent;
}

.list {
  width: 1256px;
}

.list-title {
  height: 35px;
  margin: 0;
  padding: 12px 6px 0 0;
  font-size: 12px;
  font-weight: bold;
  line-height: 14px;
}

.group-head {
  display: flex;
  width: 1238px;
  height: 18px;
  margin-left: -2px;
  background: #e2e9ec;
  border: 1px solid #666;
}

.group-head span {
  height: 100%;
  border-left: 2px solid #666;
}

.gh-1 { width: 68px; }
.gh-2 { width: 198px; }
.gh-3 { width: 94px; }
.gh-4 { width: 90px; }
.gh-5 { width: 128px; }
.gh-6 { width: 128px; }
.gh-7 { width: 81px; }
.gh-8 { width: 185px; }
.gh-9 { flex: 1; border-left: none !important; }

.grid-body {
  display: flex;
  height: 785px;
}

.vscroll {
  display: flex;
  flex-direction: column;
  align-items: center;
  width: 17px;
  background: #f1f1f1;
  border-left: 1px solid #fff;
}

.vs-up {
  margin-top: 7px;
}

.vs-thumb {
  width: 15px;
  height: 372px;
  margin-top: 82px;
  background: #c9c9c9;
}

.vs-down {
  margin-top: auto;
  margin-bottom: 6px;
}

.grid-wrap {
  width: 1239px;
  background: #fff;
}

.grid {
  width: 1239px;
  table-layout: fixed;
  border-collapse: separate;
  border-spacing: 0;
}

.c-ind { width: 18px; }
.c-code { width: 69px; }
.c-name { width: 197px; }
.c-group { width: 95px; }
.c-unit { width: 90px; }
.c-price { width: 128px; }
.c-bar { width: 81px; }
.c-bar2 { width: 185px; }
.c-note { width: 248px; }

.grid th {
  height: 19px;
  padding: 0 3px;
  overflow: hidden;
  white-space: nowrap;
  font-size: 11.5px;
  font-weight: normal;
  text-align: right;
  background: #f2f2f2;
  border-bottom: 1px solid #000;
  border-left: 2px solid #444;
}

.grid th:nth-child(2) {
  word-spacing: 4px;
}

.grid th:last-child {
  border-left: none;
}

.grid th.star {
  padding: 0;
  font-size: 16px;
  text-align: center;
  color: #fff;
  background: #3399ff;
  border-left: none;
  border-bottom: none;
}

.grid td {
  height: 23px;
  padding: 0 3px;
  overflow: hidden;
  white-space: nowrap;
  word-spacing: 2px;
  background: #e9e9e9;
  border-bottom: 1px solid #bfbfbf;
  border-left: 1px solid #bfbfbf;
}

.grid tbody tr:nth-child(even) td {
  background: #b8d7da;
}

.grid tbody tr.sel td {
  background: #3399ff;
  color: #fff;
}

.grid tbody td:first-child,
.grid tbody tr:nth-child(even) td:first-child,
.grid tbody tr.sel td:first-child {
  padding: 0 2px;
  background: #f1f1f1;
  border-left: none;
  border-bottom-color: #666;
}

.grid tbody td:nth-child(2) {
  letter-spacing: 0.8px;
}

.grid tbody td:nth-child(4) {
  word-spacing: 0;
}

.grid td:last-child {
  border-left: none;
}

.grid td.num {
  direction: ltr;
  text-align: left;
  font-size: 11px;
}

.hscroll {
  display: flex;
  align-items: center;
  height: 17px;
  padding: 0 7px 0 22px;
  background: #f1f1f1;
}

.hs-thumb {
  width: 17px;
  height: 17px;
  margin: 0 5px 0 auto;
  background: #c9c9c9;
}

.grid-foot {
  display: flex;
  align-items: center;
  height: 25px;
  margin-top: 1px;
  padding-left: 13px;
  background: #d8d8d8;
  font-size: 11px;
}

.gf-count {
  width: 151px;
  text-align: left;
  direction: ltr;
  unicode-bidi: plaintext;
}

.gf-time {
  width: 49px;
  height: 25px;
  line-height: 25px;
  text-align: center;
  border-left: 3px solid #c6c6c6;
  border-right: 3px solid #c6c6c6;
}

.gf-icons {
  display: flex;
  align-items: center;
  gap: 8px;
  margin-left: 8px;
}

/* right form */
.side {
  width: 470px;
  margin-left: 19px;
  padding-top: 4px;
}

.tabs {
  display: flex;
  align-items: flex-end;
  gap: 2px;
  height: 22px;
  margin: 0 12px 0 20px;
  padding-right: 1px;
  border-bottom: 1px solid #6f7f80;
}

.tab {
  width: 84px;
  height: 20px;
  line-height: 20px;
  text-align: center;
  background: #b0c5ca;
}

.tab-on {
  width: 122px;
  height: 22px;
  font-weight: bold;
  font-size: 12px;
  line-height: 22px;
  background: #f2f2f2;
  border-radius: 3px 3px 0 0;
}

.side-body {
  display: flex;
  flex-direction: column;
  height: 850px;
  margin-top: 4px;
  padding: 15px 28px 0 19px;
  border-left: 1px solid #b2cbcd;
}

.fields {
  display: grid;
  grid-template-columns: 129px 85px 129px 79px;
  grid-auto-rows: 21px;
  row-gap: 7px;
}

.fields label {
  padding-right: 15px;
  line-height: 21px;
  text-align: right;
  white-space: nowrap;
}

.fields label:nth-child(4n),
.fields .stores-label {
  padding-right: 0;
}

.box {
  display: block;
  width: 100%;
  height: 21px;
  margin: 0;
  padding: 0 3px;
  border: 1px solid #6f6f6f;
  background: #fff;
  font-family: inherit;
  font-size: 12px;
  font-weight: bold;
}

.stores {
  grid-column: 1 / 4;
  grid-row: 4 / span 3;
  margin-top: -1px;
  height: 81px;
  padding: 2px 3px;
  background: #fff;
  border: 1px solid #6f6f6f;
}

.stores-label {
  grid-column: 4;
  grid-row: 4;
  padding-top: 2px;
}

.store {
  display: flex;
  align-items: center;
  height: 14px;
  line-height: 14px;
  font-size: 11.5px;
}

.chk {
  display: flex;
  align-items: center;
  justify-content: center;
  width: 11px;
  height: 11px;
  margin-left: 4px;
  border: 1px solid #777;
}

.custom-head {
  display: flex;
  align-items: center;
  margin: 20px 1px 0 7px;
  height: 17px;
  font-size: 11px;
}

.custom-line {
  flex: 1;
  height: 1px;
  margin: 0 6px 0 5px;
  background: #5d6e70;
}

.custom-sub {
  height: 16px;
  padding-right: 23px;
  line-height: 15px;
  font-size: 11.5px;
}

.custom-rows {
  display: grid;
  grid-template-columns: 130px 200px 66px;
  grid-auto-rows: 20px;
  column-gap: 5px;
  row-gap: 5px;
  margin-left: 17px;
}

.combo {
  display: flex;
  align-items: center;
  padding-left: 5px;
  background: #e0e0e0;
  border: 1px solid #b8b8b8;
}

.box.plain {
  height: 18px;
}

.clip {
  width: 66px;
  margin-left: -2px;
  overflow: hidden;
  white-space: nowrap;
  font-size: 10.8px;
  line-height: 18px;
}

.clip span {
  display: inline-block;
}

.hint {
  margin: auto 22px 0 0;
  color: #667a7d;
  font-size: 10.8px;
  line-height: 14px;
}

.hint-rule {
  width: 451px;
  height: 1px;
  margin: 4px 0 0 -12px;
  background: #6f7375;
}

.actions {
  display: flex;
  gap: 7px;
  margin-top: 14px;
}

.actions button {
  width: 70px;
  height: 29px;
  padding: 0;
  background: #f2f2f2;
  border: 1px solid #000;
  font-family: inherit;
  font-size: 12px;
  color: #111;
}

/* sidebar */
.nav {
  width: 88px;
  padding-top: 12px;
}

.nav-item {
  display: flex;
  flex-direction: column;
  align-items: center;
  height: 74px;
  margin: 0 8px;
  padding-top: 10px;
  border-bottom: 1px solid #c4c4c4;
  color: #1794a6;
  font-size: 12px;
  line-height: 15px;
  text-align: center;
  direction: rtl;
  white-space: nowrap;
}

.nav-item svg {
  height: 33px;
  margin-bottom: 4px;
}

.nav-item:last-child {
  border-bottom: none;
}

.nav-two {
  height: 89px;
  white-space: normal;
}

/* status row */
.status {
  display: flex;
  align-items: flex-start;
  height: 43px;
  padding: 8px 0 0 110px;
  font-size: 10.5px;
}

.st-text {
  line-height: 16px;
  white-space: nowrap;
}

.st-cal {
  margin-left: 5px;
}

.st-portal {
  margin-left: 38px;
}

.st-globe {
  margin-left: 6px;
}

.st-fold {
  display: flex;
  justify-content: center;
  align-items: center;
  width: 82px;
  height: 13px;
  margin: 22px 0 0 auto;
  background: #d0d0d0;
}

.st-fold i {
  border-style: solid;
  border-width: 8px 5px 0 5px;
  border-color: #333 transparent transparent transparent;
}

.black-bar {
  height: 4px;
  background: #1b1b1b;
}
```
